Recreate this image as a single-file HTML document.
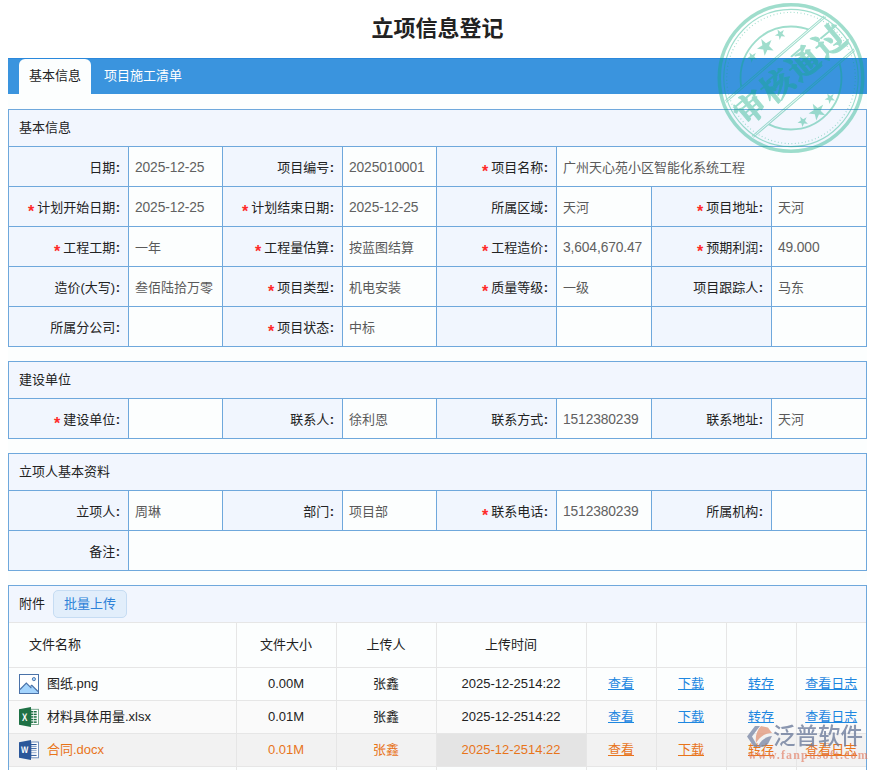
<!DOCTYPE html>
<html lang="zh-CN">
<head>
<meta charset="utf-8">
<title>立项信息登记</title>
<style>
*{box-sizing:border-box;margin:0;padding:0}
html,body{width:876px;height:770px;overflow:hidden;background:#fff}
body{position:relative;font-family:"Liberation Sans","Noto Sans CJK SC",sans-serif;font-size:13px;color:#222}
#wrap{position:absolute;left:8px;top:0;width:859px;height:770px;background:linear-gradient(#fff 0,#fff 94px,#fcfefe 94px)}
h1{position:absolute;left:0;top:12px;width:859px;text-align:center;font-size:22px;line-height:34px;font-weight:bold;color:#222;letter-spacing:0}
#tabs{position:absolute;left:0;top:58px;width:859px;height:36px;background:#3a94de;border-top:1px solid #2a88dc}
#tabs .t{position:absolute;top:0;height:35px;line-height:33px;font-size:13px;color:#fff;text-align:center}
#tabs .on{left:11px;width:72px;background:#fcfefe;color:#222;border-radius:6px 6px 0 0}
#tabs .t2{left:96px;width:78px}
.panel{position:absolute;left:0;width:859px;background:#6fa8dc;padding:1px;display:grid;gap:1px;
 grid-template-columns:119px 93px 119px 93px 119px 94px 119px 94px}
.hd{grid-column:1/9;height:36px;line-height:35px;background:#f2f6fe;padding-left:10px;color:#222}
.l,.v{height:39px;line-height:41px;white-space:nowrap;overflow:hidden}
.l{background:#f1f6fe;text-align:right;padding-right:8px;color:#222}
.v{background:#fcfefe;padding-left:6px;color:#5a5a5a}
.l i{font-style:normal;color:#ff2a2a;margin-right:3px;font-size:16px;font-weight:bold;position:relative;top:4.5px;line-height:10px}
.l b{font-weight:bold;margin-left:0.5px}
.n{font-size:13.8px;letter-spacing:-0.12px;color:#616161}
#att{position:absolute;left:0;top:585px;width:859px;height:200px;border:1px solid #6fa8dc;background:#fcfefe}
#att .ah{height:36px;background:#f2f6fe;position:relative;line-height:36px;padding-left:10px;color:#222}
#att .btn{position:absolute;left:44px;top:4px;width:74px;height:28px;line-height:26px;border:1px solid #c6dcf3;border-radius:5px;background:#e2eefb;color:#2e82d8;text-align:center}
#att table{border-collapse:collapse;table-layout:fixed;width:857px;border-top:1px solid #e6e6e6}
#att td,#att th{border-right:1px solid #e6e6e6;border-bottom:1px solid #e6e6e6;text-align:center;font-weight:normal;color:#222;white-space:nowrap;overflow:hidden;padding:0}
#att th{height:45px;line-height:44px}
#att td{height:33px;line-height:32px}
#att td:last-child,#att th:last-child{border-right:none}
#att .fn{text-align:left;padding-left:10px}
#att th.fn{padding-left:20px}
#att a{color:#1e87e0;text-decoration:underline}
#att tr.r2 td{background:#fafafa}
#att tr.hv td{background:#f2f2f2;color:#e8741a}
#att tr.hv td.tm{background:#e4e4e4}
#att tr.hv a{color:#e8741a}
#att svg{vertical-align:middle;margin-right:8px;position:relative;top:-1px;text-rendering:geometricPrecision}
.s3{grid-column:span 3}
.s7{grid-column:span 7}
</style>
</head>
<body>
<div id="wrap">
<h1>立项信息登记</h1>
<div id="tabs"><div class="t on">基本信息</div><div class="t t2">项目施工清单</div></div>

<div class="panel" style="top:109px">
<div class="hd">基本信息</div>
<div class="l">日期<b>:</b></div><div class="v"><span class="n">2025-12-25</span></div><div class="l">项目编号<b>:</b></div><div class="v"><span class="n">2025010001</span></div><div class="l"><i>*</i>项目名称<b>:</b></div><div class="v s3">广州天心苑小区智能化系统工程</div>
<div class="l"><i>*</i>计划开始日期<b>:</b></div><div class="v"><span class="n">2025-12-25</span></div><div class="l"><i>*</i>计划结束日期<b>:</b></div><div class="v"><span class="n">2025-12-25</span></div><div class="l">所属区域<b>:</b></div><div class="v">天河</div><div class="l"><i>*</i>项目地址<b>:</b></div><div class="v">天河</div>
<div class="l"><i>*</i>工程工期<b>:</b></div><div class="v">一年</div><div class="l"><i>*</i>工程量估算<b>:</b></div><div class="v">按蓝图结算</div><div class="l"><i>*</i>工程造价<b>:</b></div><div class="v"><span class="n">3,604,670.47</span></div><div class="l"><i>*</i>预期利润<b>:</b></div><div class="v"><span class="n">49.000</span></div>
<div class="l">造价(大写)<b>:</b></div><div class="v">叁佰陆拾万零</div><div class="l"><i>*</i>项目类型<b>:</b></div><div class="v">机电安装</div><div class="l"><i>*</i>质量等级<b>:</b></div><div class="v">一级</div><div class="l">项目跟踪人<b>:</b></div><div class="v">马东</div>
<div class="l">所属分公司<b>:</b></div><div class="v"></div><div class="l"><i>*</i>项目状态<b>:</b></div><div class="v">中标</div><div class="l"></div><div class="v"></div><div class="l"></div><div class="v"></div>
</div>

<div class="panel" style="top:361px">
<div class="hd">建设单位</div>
<div class="l"><i>*</i>建设单位<b>:</b></div><div class="v"></div><div class="l">联系人<b>:</b></div><div class="v">徐利恩</div><div class="l">联系方式<b>:</b></div><div class="v"><span class="n">1512380239</span></div><div class="l">联系地址<b>:</b></div><div class="v">天河</div>
</div>

<div class="panel" style="top:453px">
<div class="hd">立项人基本资料</div>
<div class="l">立项人<b>:</b></div><div class="v">周琳</div><div class="l">部门<b>:</b></div><div class="v">项目部</div><div class="l"><i>*</i>联系电话<b>:</b></div><div class="v"><span class="n">1512380239</span></div><div class="l">所属机构<b>:</b></div><div class="v"></div>
<div class="l">备注<b>:</b></div><div class="v s7"></div>
</div>

<div id="att">
<div class="ah">附件<div class="btn">批量上传</div></div>
<table>
<colgroup><col style="width:227px"><col style="width:100px"><col style="width:100px"><col style="width:150px"><col style="width:70px"><col style="width:70px"><col style="width:70px"><col style="width:70px"></colgroup>
<tr><th class="fn">文件名称</th><th>文件大小</th><th>上传人</th><th>上传时间</th><th></th><th></th><th></th><th></th></tr>
<tr><td class="fn"><svg width="20" height="20" viewBox="0 0 20 20"><rect x="0.5" y="0.5" width="19" height="19" fill="#fff" stroke="#4a72a8"/><path d="M1 15.5L7.3 9L11.4 13.1L12.8 11.3L19 17.5V19H1Z" fill="#a3d4fd"/><path d="M1 15.5L7.3 9L12.4 14.2M11.6 12.2L12.8 11.3L19 17.5" fill="none" stroke="#4a72a8" stroke-width="1.15"/><circle cx="14.9" cy="5.1" r="1.6" fill="#a3d4fd" stroke="#4a72a8" stroke-width="0.9"/></svg>图纸.png</td><td>0.00M</td><td>张鑫</td><td class="tm">2025-12-2514:22</td><td><a>查看</a></td><td><a>下载</a></td><td><a>转存</a></td><td><a>查看日志</a></td></tr>
<tr class="r2"><td class="fn"><svg width="20" height="20" viewBox="0 0 20 20"><rect x="12" y="2.3" width="7.5" height="15.2" fill="#fff" stroke="#1f7145" stroke-opacity=".65" stroke-width="0.9"/><g fill="#1f7145"><rect x="12" y="4.0" width="2.4" height="1.5"/><rect x="15" y="4.0" width="2.7" height="1.5"/><rect x="12" y="6.6" width="2.4" height="1.5"/><rect x="15" y="6.6" width="2.7" height="1.5"/><rect x="12" y="9.2" width="2.4" height="1.5"/><rect x="15" y="9.2" width="2.7" height="1.5"/><rect x="12" y="11.8" width="2.4" height="1.5"/><rect x="15" y="11.8" width="2.7" height="1.5"/><rect x="12" y="14.4" width="2.4" height="1.5"/><rect x="15" y="14.4" width="2.7" height="1.5"/><path d="M0 2.2L12 0V20L0 17.8Z"/></g><text transform="translate(5.75 13.9) scale(0.74 1)" font-family="Liberation Sans,sans-serif" font-size="10.8" font-weight="bold" fill="#fff" text-anchor="middle">X</text></svg>材料具体用量.xlsx</td><td>0.01M</td><td>张鑫</td><td class="tm">2025-12-2514:22</td><td><a>查看</a></td><td><a>下载</a></td><td><a>转存</a></td><td><a>查看日志</a></td></tr>
<tr class="hv"><td class="fn"><svg width="20" height="20" viewBox="0 0 20 20"><rect x="12" y="2" width="7.5" height="15.8" fill="#fff" stroke="#2b579a" stroke-opacity=".7" stroke-width="0.9"/><g fill="#2b579a"><rect x="12" y="4.0" width="5.6" height="1.1" fill-opacity="1"/><rect x="12" y="6.0" width="5.6" height="1.1" fill-opacity="0.55"/><rect x="12" y="8.0" width="5.6" height="1.1" fill-opacity="0.85"/><rect x="12" y="10.0" width="5.6" height="1.1" fill-opacity="0.45"/><rect x="12" y="12.1" width="5.6" height="1.1" fill-opacity="0.45"/><rect x="12" y="14.9" width="5.6" height="1.1" fill-opacity="0.9"/><path d="M0 2.2L12 0V20L0 17.8Z"/></g><text transform="translate(5.5 13.1) scale(0.8 1)" font-family="Liberation Sans,sans-serif" font-size="9.6" font-weight="bold" fill="#fff" text-anchor="middle">W</text></svg>合同.docx</td><td>0.01M</td><td>张鑫</td><td class="tm">2025-12-2514:22</td><td><a>查看</a></td><td><a>下载</a></td><td><a>转存</a></td><td><a>查看日志</a></td></tr>
<tr><td class="fn">&nbsp;</td><td></td><td></td><td class="tm"></td><td></td><td></td><td></td><td></td></tr>
</table>
</div>

<svg id="stamp" width="160" height="160" viewBox="-80 -80 160 160" style="position:absolute;left:703px;top:-2.5px;opacity:.4">
<defs><mask id="mk"><rect x="-80" y="-80" width="160" height="160" fill="#fff"/><rect x="-80" y="-25.8" width="160" height="46.6" fill="#000" transform="rotate(-40)"/></mask></defs>
<g fill="none" stroke="#12ac82" transform="scale(0.98,1)">
<circle r="73.2" stroke-width="3.6"/>
<circle r="68.6" stroke-width="1.1"/>
<circle r="65.6" stroke-width="1.2" stroke-dasharray="0.9 2.6"/>
<circle r="51.5" stroke-width="1.9" mask="url(#mk)"/>
<g transform="rotate(-40)"><path d="M-66 -25.8H66M-66.5 -24H66.5M-67.5 20.8H67.5M-68 19H68" stroke-width="1"/></g>
</g>
<g fill="#12ac82" transform="scale(0.98,1)"><polygon points="-42.5,-25.6 -39.5,-23.0 -35.9,-25.0 -37.5,-21.3 -34.6,-18.5 -38.6,-18.9 -40.3,-15.2 -41.2,-19.1 -45.2,-19.6 -41.7,-21.7"/><polygon points="-30.4,-39.0 -25.5,-34.8 -19.9,-37.9 -22.4,-31.9 -17.7,-27.5 -24.1,-28.1 -26.9,-22.2 -28.3,-28.5 -34.7,-29.3 -29.2,-32.7"/><polygon points="-13.8,-48.5 -10.8,-45.9 -7.3,-47.9 -8.8,-44.2 -5.9,-41.4 -9.9,-41.8 -11.6,-38.1 -12.5,-42.0 -16.5,-42.5 -13.1,-44.6"/><polygon points="9.3,38.7 12.4,41.3 15.9,39.3 14.3,43.0 17.3,45.8 13.3,45.4 11.6,49.1 10.6,45.2 6.7,44.7 10.1,42.6"/><polygon points="22.2,25.7 27.1,29.9 32.8,26.8 30.3,32.8 35.0,37.2 28.5,36.6 25.8,42.5 24.3,36.2 17.9,35.4 23.4,32.0"/><polygon points="37.0,15.5 40.0,18.1 43.5,16.1 42.0,19.8 44.9,22.6 40.9,22.2 39.2,25.9 38.3,22.0 34.3,21.5 37.7,19.4"/></g>
<text transform="rotate(-40)" x="3" y="8.5" text-anchor="middle" font-family="'Liberation Serif','Noto Serif CJK SC',serif" font-weight="700" font-size="32" letter-spacing="2.5" fill="#12ac82" stroke="#12ac82" stroke-width="1" stroke-linejoin="round">审核通过</text>
</svg>

<div id="wm" style="position:absolute;left:738px;top:722px;width:124px;height:48px;opacity:.78">
<svg width="28" height="24" viewBox="0 0 28 24" style="position:absolute;left:0;top:3px">
<path d="M9 1L1 11.5L8 22L12 22L6 11.5L14 1Z" fill="#7d8aa8"/>
<path d="M15 1L22 2.5L26 8C20 8 14 11 10 18C9 11 11 5 15 1Z" fill="#e2987c"/>
<path d="M12 22C14 16 19 12 26 11L22 19L17 22Z" fill="#7d8aa8"/>
</svg>
<div style="position:absolute;left:27px;top:0;font-size:22.5px;line-height:30px;color:#6b7a9a;font-weight:500;white-space:nowrap;font-family:'Liberation Sans','Noto Sans CJK SC',sans-serif;letter-spacing:0">泛普软件</div>
<div style="position:absolute;left:2px;top:25px;font-size:12px;line-height:16px;color:#e2765a;opacity:.8;white-space:nowrap;font-family:'Liberation Serif',serif;font-weight:bold;letter-spacing:1.15px">www.fanpusoft.com</div>
</div>

</div>
</body>
</html>
